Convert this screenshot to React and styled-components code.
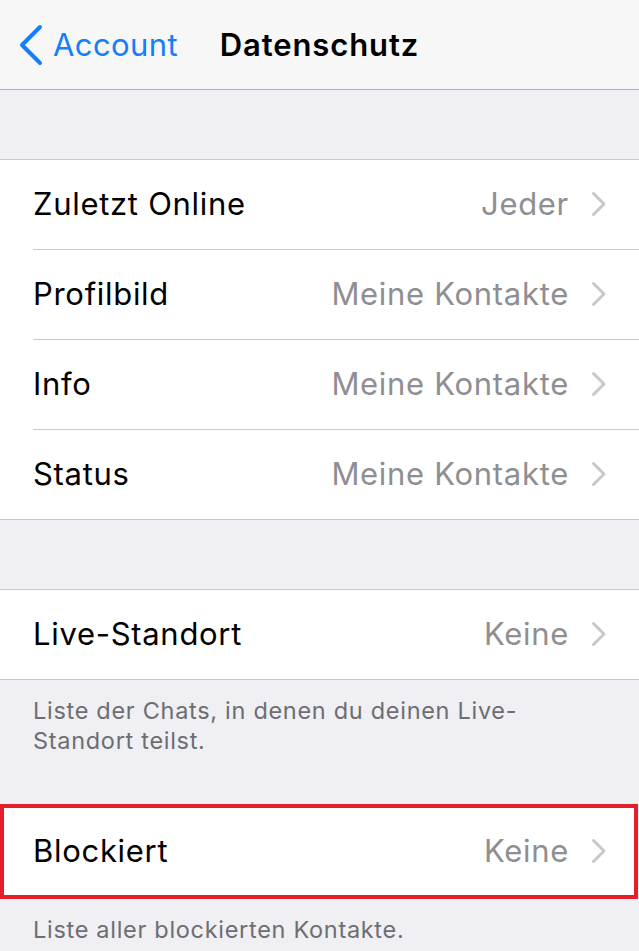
import React from 'react';
import styled, { createGlobalStyle } from 'styled-components';

const GlobalStyle = createGlobalStyle`
  body {
    margin: 0;
    background: #efeff4;
    font-family: Inter, 'Noto Sans', sans-serif;
    -webkit-font-smoothing: antialiased;
  }
`;

const Page = styled.div`
  width: 639px;
  min-height: 951px;
  background: #efeff4;
  overflow: hidden;
`;

const NavBar = styled.header`
  position: relative;
  height: 89px;
  background: #f7f7f7;
  border-bottom: 1px solid #b2b2b2;
  display: flex;
  align-items: center;
  justify-content: center;
`;

const BackButton = styled.div`
  position: absolute;
  left: 18px;
  top: 0;
  bottom: 0;
  display: flex;
  align-items: center;
  gap: 9px;
  color: #147efb;
  font-size: 31px;
  letter-spacing: 0.4px;
`;

const Title = styled.h1`
  margin: 0;
  font-size: 31px;
  font-weight: 600;
  color: #000;
  letter-spacing: 0.9px;
`;

const Spacer = styled.div`
  height: ${p => p.$h}px;
`;

const Group = styled.section`
  background: #fff;
  border-top: 1px solid #c8c7cc;
  border-bottom: 1px solid #c8c7cc;
`;

const Highlight = styled.div`
  background: #fff;
  border: 4px solid #e41e2b;
  margin-right: 1px;
`;

const Row = styled.div`
  height: ${p => p.$h || 89}px;
  display: flex;
  align-items: center;
  padding-left: ${p => p.$padL || 33}px;
  padding-right: ${p => p.$padR || 32}px;
  padding-bottom: 2px;
  box-sizing: border-box;
`;

const Separator = styled.div`
  height: 1px;
  margin-left: 33px;
  background: #c8c7cc;
`;

const Label = styled.span`
  flex: 1;
  font-size: 31px;
  color: #000;
  letter-spacing: 0.7px;
`;

const Value = styled.span`
  font-size: 31px;
  color: #8e8e93;
  letter-spacing: 0.7px;
  margin-right: 22px;
`;

const Footer = styled.p`
  margin: 0;
  padding: ${p => p.$top || 16}px 33px 0;
  font-size: 23.5px;
  line-height: 30px;
  color: #6d6d72;
  letter-spacing: 0.7px;
`;

const Chevron = () => (
  <svg width="16" height="26" viewBox="0 0 16 26">
    <path d="M2.5 2.5 L13 13 L2.5 23.5" fill="none" stroke="#c7c7cc" strokeWidth="3" strokeLinecap="round" strokeLinejoin="round" />
  </svg>
);

const BackChevron = () => (
  <svg width="26" height="42" viewBox="0 0 26 42">
    <path d="M22 3 L4 21 L22 39" fill="none" stroke="#147efb" strokeWidth="4" strokeLinecap="round" strokeLinejoin="round" />
  </svg>
);

const SettingRow = ({ label, value, padL, padR, h }) => (
  <Row $padL={padL} $padR={padR} $h={h}>
    <Label>{label}</Label>
    <Value>{value}</Value>
    <Chevron />
  </Row>
);

const privacy = [
  { label: 'Zuletzt Online', value: 'Jeder' },
  { label: 'Profilbild', value: 'Meine Kontakte' },
  { label: 'Info', value: 'Meine Kontakte' },
  { label: 'Status', value: 'Meine Kontakte' },
];

export default function App() {
  return (
    <Page>
      <GlobalStyle />
      <NavBar>
        <BackButton>
          <BackChevron />
          <span>Account</span>
        </BackButton>
        <Title>Datenschutz</Title>
      </NavBar>

      <Spacer $h={69} />
      <Group>
        {privacy.map((item, i) => (
          <React.Fragment key={item.label}>
            {i > 0 && <Separator />}
            <SettingRow label={item.label} value={item.value} />
          </React.Fragment>
        ))}
      </Group>

      <Spacer $h={69} />
      <Group>
        <SettingRow label="Live-Standort" value="Keine" />
      </Group>
      <Footer>Liste der Chats, in denen du deinen Live-<br />Standort teilst.</Footer>

      <Spacer $h={48} />
      <Highlight>
        <SettingRow label="Blockiert" value="Keine" padL={29} padR={27} h={87} />
      </Highlight>
      <Footer $top={16}>Liste aller blockierten Kontakte.</Footer>
    </Page>
  );
}
